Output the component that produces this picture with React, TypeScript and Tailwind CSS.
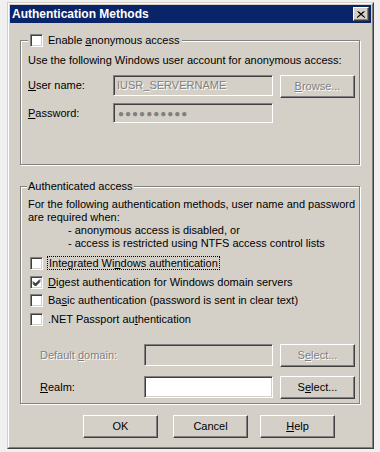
import React from "react";

const raised =
  "border border-t-white border-l-white border-r-[#404040] border-b-[#404040] shadow-[inset_-1px_-1px_0_#808080] bg-[#d4d0c8]";
const sunken =
  "border border-t-[#808080] border-l-[#808080] border-r-white border-b-white shadow-[inset_1px_1px_0_#404040,inset_-1px_-1px_0_#d4d0c8]";
const etched =
  "border border-[#808080] shadow-[inset_1px_1px_0_#fff,1px_1px_0_#fff]";
const grayed = "text-[#808080] [text-shadow:1px_1px_0_#fff]";

const Check = ({ checked }: { checked?: boolean }) => (
  <div className={`w-[13px] h-[13px] shrink-0 bg-white ${sunken} flex items-center justify-center`}>
    {checked && (
      <svg width="9" height="9" viewBox="0 0 9 9">
        <path d="M1 3.5 L3.5 6 L8 1.5 M1 4.5 L3.5 7 L8 2.5 M1 5.5 L3.5 8 L8 3.5" stroke="#000" strokeWidth="1" fill="none" />
      </svg>
    )}
  </div>
);

const Btn = ({
  children,
  disabled,
  className = "",
}: {
  children: React.ReactNode;
  disabled?: boolean;
  className?: string;
}) => (
  <div
    className={`w-[75px] h-[23px] shrink-0 flex items-center justify-center ${raised} ${
      disabled ? grayed : "text-black"
    } ${className}`}
  >
    {children}
  </div>
);

const CheckRow = ({
  checked,
  h,
  children,
}: {
  checked?: boolean;
  h: string;
  children: React.ReactNode;
}) => (
  <div className={`flex items-center pl-[9px] ${h}`}>
    <Check checked={checked} />
    <div className="ml-[4px]">{children}</div>
  </div>
);

export default function App() {
  return (
    <div className="w-[380px] h-[452px] bg-[#f0f0f0] pt-[2px] pl-[7px] font-['Liberation_Sans',Arial,sans-serif] text-[11px] leading-[13px] text-black overflow-hidden">
      {/* Window frame */}
      <div className="w-[367px] h-[447px] bg-[#d4d0c8] border border-t-[#d4d0c8] border-l-[#d4d0c8] border-r-[#404040] border-b-[#404040]">
        <div className="h-full border border-t-white border-l-white border-r-[#808080] border-b-[#808080] p-px flex flex-col">
          {/* Title bar */}
          <div className="h-[18px] bg-[#0a246a] flex items-center justify-between pl-[2px] pr-[2px]">
            <span className="text-white font-bold text-[12px]">Authentication Methods</span>
            <div className={`w-[16px] h-[14px] flex items-center justify-center ${raised}`}>
              <svg width="8" height="7" viewBox="0 0 8 7">
                <path d="M0.5 0.5 L7.5 6.5 M7.5 0.5 L0.5 6.5 M1.5 0.5 L8 6.5 M6.5 0.5 L0 6.5" stroke="#000" strokeWidth="1" />
              </svg>
            </div>
          </div>

          <div className="px-[10px] pt-[17px] flex flex-col">
            {/* Anonymous access group */}
            <div className={`relative w-[340px] h-[125px] ${etched}`}>
              <div className="absolute -top-[7px] left-[7px] flex items-center bg-[#d4d0c8] pl-[2px] pr-[3px]">
                <Check />
                <span className="ml-[5px]">
                  Enable <u>a</u>nonymous access
                </span>
              </div>
              <div className="pt-[13px] pl-[7px]">
                Use the following Windows user account for anonymous access:
              </div>
              <div className="flex items-start pl-[7px] mt-[8px] h-[23px]">
                <div className="w-[85px] h-[21px] flex items-center">
                  <span>
                    <u>U</u>ser name:
                  </span>
                </div>
                <div className={`w-[160px] h-[21px] ${sunken} flex items-center pl-[3px] ${grayed}`}>
                  IUSR_SERVERNAME
                </div>
                <Btn disabled className="ml-[7px] w-[74px]">
                  <span>
                    <u>B</u>rowse...
                  </span>
                </Btn>
              </div>
              <div className="flex items-start pl-[7px] mt-[5px]">
                <div className="w-[85px] h-[20px] flex items-center">
                  <span>
                    <u>P</u>assword:
                  </span>
                </div>
                <div className={`w-[160px] h-[20px] ${sunken} flex items-center pl-[4px] text-[#808080] tracking-[1px] text-[10px]`}>
                  ●●●●●●●●●●
                </div>
              </div>
            </div>

            {/* Authenticated access group */}
            <div className={`relative w-[340px] h-[218px] mt-[21px] ${etched}`}>
              <div className="absolute -top-[7px] left-[6px] bg-[#d4d0c8] px-[1px]">
                Authenticated access
              </div>
              <div className="pt-[11px] pl-[7px]">
                <div>For the following authentication methods, user name and password</div>
                <div>are required when:</div>
                <div className="pl-[40px]">- anonymous access is disabled, or</div>
                <div className="pl-[40px]">- access is restricted using NTFS access control lists</div>
              </div>
              <div className="mt-[4px] flex flex-col">
                <CheckRow h="h-[19px]">
                  <span className="border border-dotted border-black px-px">
                    Integrated Wi<u>n</u>dows authentication
                  </span>
                </CheckRow>
                <CheckRow checked h="h-[18px]">
                  <span className="px-px">
                    <u>D</u>igest authentication for Windows domain servers
                  </span>
                </CheckRow>
                <CheckRow h="h-[19px]">
                  <span className="px-px">
                    Ba<u>s</u>ic authentication (password is sent in clear text)
                  </span>
                </CheckRow>
                <CheckRow h="h-[19px]">
                  <span className="px-px">
                    .NET Passport au<u>t</u>hentication
                  </span>
                </CheckRow>
              </div>
              <div className="flex items-start pl-[19px] mt-[15px] h-[23px]">
                <div className={`w-[104px] h-[22px] flex items-center ${grayed}`}>
                  <span>
                    Default <u>d</u>omain:
                  </span>
                </div>
                <div className={`w-[129px] h-[22px] ${sunken}`} />
                <Btn disabled className="ml-[7px] w-[74px]">
                  <span>
                    S<u>e</u>lect...
                  </span>
                </Btn>
              </div>
              <div className="flex items-start pl-[19px] mt-[9px] h-[23px]">
                <div className="w-[104px] h-[22px] flex items-center">
                  <span>
                    <u>R</u>ealm:
                  </span>
                </div>
                <div className={`w-[129px] h-[22px] bg-white ${sunken}`} />
                <Btn className="ml-[7px] w-[74px]">
                  <span>
                    S<u>e</u>lect...
                  </span>
                </Btn>
              </div>
            </div>

            {/* Dialog buttons */}
            <div className="flex mt-[11px] pl-[63px]">
              <Btn>OK</Btn>
              <Btn className="ml-[15px]">Cancel</Btn>
              <Btn className="ml-[12px]">
                <span>
                  <u>H</u>elp
                </span>
              </Btn>
            </div>
          </div>
        </div>
      </div>
    </div>
  );
}
